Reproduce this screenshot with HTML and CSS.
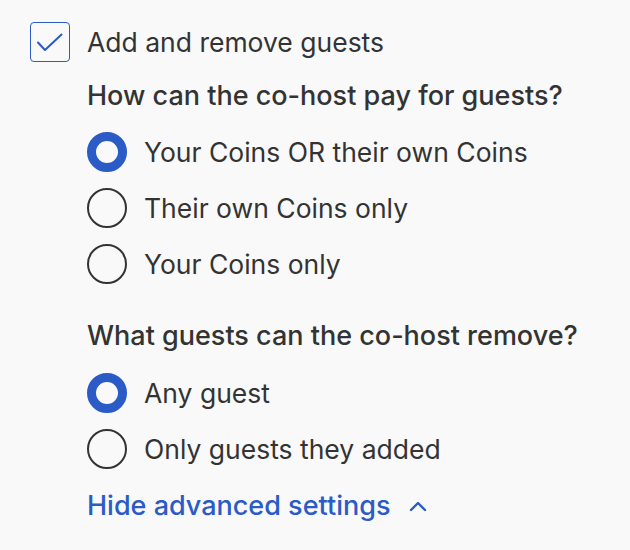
FILE: index.html
```html
<!DOCTYPE html>
<html lang="en">
<head>
    <meta charset="UTF-8">
    <title>Co-host permissions</title>
    <link rel="stylesheet" href="styles.css">
</head>
<body>
    <div class="panel">
        <label class="check-row">
            <span class="checkbox">
                <svg width="40" height="40" viewBox="0 0 40 40"><path d="M8 20.5l7 7.5L31.5 12.5" fill="none" stroke="#2a5bc6" stroke-width="2" stroke-linecap="round" stroke-linejoin="round"/></svg>
            </span>
            <span class="check-label">Add and remove guests</span>
        </label>

        <div class="options">
            <h3 class="question">How can the co-host pay for guests?</h3>
            <div class="radio-list">
                <label class="radio-row"><span class="radio selected"></span>Your Coins OR their own Coins</label>
                <label class="radio-row"><span class="radio"></span>Their own Coins only</label>
                <label class="radio-row"><span class="radio"></span>Your Coins only</label>
            </div>

            <h3 class="question second">What guests can the co-host remove?</h3>
            <div class="radio-list">
                <label class="radio-row"><span class="radio selected"></span>Any guest</label>
                <label class="radio-row"><span class="radio"></span>Only guests they added</label>
            </div>

            <a class="toggle-link" href="#">Hide advanced settings
                <svg width="20" height="20" viewBox="0 0 20 20"><path d="M3 14L10 7l7 7" fill="none" stroke="#2a5bc6" stroke-width="2.4" stroke-linecap="round" stroke-linejoin="round"/></svg>
            </a>
        </div>
    </div>
</body>
</html>
```

FILE: styles.css
```css
* {
    box-sizing: border-box;
    margin: 0;
    padding: 0;
}
body {
    font-family: Inter, "Noto Sans", sans-serif;
    background: #f9f9f9;
    color: #333;
}
.panel {
    padding: 22px 30px;
}
.check-row {
    display: flex;
    align-items: center;
    gap: 17px;
}
.checkbox {
    width: 40px;
    height: 40px;
    border: 1.5px solid #2a5bc6;
    border-radius: 4px;
    display: flex;
    align-items: center;
    justify-content: center;
    flex-shrink: 0;
}
.checkbox svg {
    margin: -1.5px;
}
.check-label {
    font-size: 26.5px;
    line-height: 32px;
}
.options {
    padding-left: 57px;
}
.question {
    font-size: 27px;
    line-height: 32px;
    font-weight: 500;
    margin-top: 18px;
    margin-bottom: 20px;
}
.question.second {
    margin-top: 36px;
    margin-bottom: 21px;
}
.radio-list {
    display: flex;
    flex-direction: column;
    gap: 16px;
}
.radio-row {
    display: flex;
    align-items: center;
    gap: 17px;
    font-size: 26.5px;
    line-height: 32px;
}
.radio {
    width: 40px;
    height: 40px;
    border-radius: 50%;
    border: 2px solid #333;
    flex-shrink: 0;
}
.radio.selected {
    border: 9px solid #2a5bc6;
    background: #f9f9f9;
}
.toggle-link {
    display: inline-flex;
    align-items: center;
    gap: 18px;
    margin-top: 21px;
    font-size: 27px;
    font-weight: 500;
    line-height: 32px;
    color: #2a5bc6;
    text-decoration: none;
}
```
